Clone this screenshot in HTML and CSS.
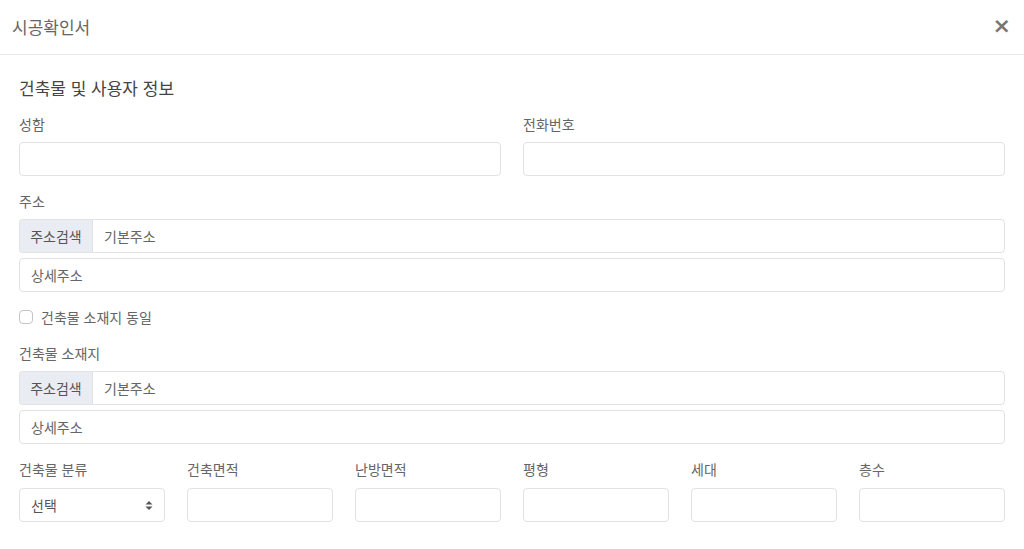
FILE: index.html
```html
<!DOCTYPE html>
<html lang="ko">
<head>
    <meta charset="UTF-8">
    <meta name="viewport" content="width=device-width, initial-scale=1.0">
    <title>시공확인서</title>
    <link rel="stylesheet" href="styles.css">
</head>
<body>
    <div class="modal">
        <div class="modal-header">
            <h1>시공확인서</h1>
            <span class="close">&times;</span>
        </div>

        <div class="modal-body">
            <h2>건축물 및 사용자 정보</h2>

            <div class="row two">
                <div class="form-group">
                    <label>성함</label>
                    <input type="text" class="form-control">
                </div>
                <div class="form-group">
                    <label>전화번호</label>
                    <input type="text" class="form-control">
                </div>
            </div>

            <div class="form-group">
                <label>주소</label>
                <div class="input-group">
                    <span class="addon">주소검색</span>
                    <input type="text" class="form-control" placeholder="기본주소">
                </div>
                <input type="text" class="form-control detail" placeholder="상세주소">
            </div>

            <div class="check">
                <span class="box"></span>
                <span>건축물 소재지 동일</span>
            </div>

            <div class="form-group">
                <label>건축물 소재지</label>
                <div class="input-group">
                    <span class="addon">주소검색</span>
                    <input type="text" class="form-control" placeholder="기본주소">
                </div>
                <input type="text" class="form-control detail" placeholder="상세주소">
            </div>

            <div class="row six">
                <div class="form-group">
                    <label>건축물 분류</label>
                    <div class="form-control select">
                        <span>선택</span>
                        <svg width="8" height="11" viewBox="0 0 8 11"><path d="M4 1L7.5 4.5H0.5Z M4 10L7.5 6.5H0.5Z" fill="#555"/></svg>
                    </div>
                </div>
                <div class="form-group">
                    <label>건축면적</label>
                    <input type="text" class="form-control">
                </div>
                <div class="form-group">
                    <label>난방면적</label>
                    <input type="text" class="form-control">
                </div>
                <div class="form-group">
                    <label>평형</label>
                    <input type="text" class="form-control">
                </div>
                <div class="form-group">
                    <label>세대</label>
                    <input type="text" class="form-control">
                </div>
                <div class="form-group">
                    <label>층수</label>
                    <input type="text" class="form-control">
                </div>
            </div>
        </div>
    </div>
</body>
</html>
```

FILE: styles.css
```css
body {
    font-family: "Noto Sans CJK KR", "Noto Sans", sans-serif;
    color: #555;
    background-color: #fff;
    margin: 0;
    padding: 0;
}
.modal-header {
    box-sizing: border-box;
    height: 55px;
    border-bottom: 1px solid #e6e6e6;
    display: flex;
    align-items: center;
    justify-content: space-between;
    padding: 0 13px 2px 12px;
}
.modal-header h1 {
    margin: 0;
    font-size: 17px;
    font-weight: 400;
    color: #666;
}
.close {
    font-family: "DejaVu Sans", sans-serif;
    font-size: 22px;
    font-weight: bold;
    color: #777;
    line-height: 1;
}
.modal-body {
    padding: 21px 19px 0 19px;
}
h2 {
    margin: 0 0 14px 0;
    font-size: 17px;
    font-weight: 400;
    line-height: 24px;
    color: #444;
}
.row {
    display: grid;
    column-gap: 22px;
}
.row.two {
    grid-template-columns: 1fr 1fr;
}
.row.six {
    grid-template-columns: repeat(6, 1fr);
}
.form-group {
    margin-bottom: 15px;
}
label {
    display: block;
    font-size: 14px;
    line-height: 20px;
    color: #666;
    margin-bottom: 8px;
}
.row.six label {
    margin-bottom: 9px;
}
.form-control {
    box-sizing: border-box;
    display: block;
    width: 100%;
    height: 34px;
    padding: 0 11px;
    border: 1px solid #e2e2e2;
    border-radius: 4px;
    font-family: inherit;
    font-size: 14px;
    color: #555;
    background: #fff;
    outline: none;
}
.form-control::placeholder {
    color: #666;
}
.input-group {
    display: flex;
    height: 34px;
}
.addon {
    box-sizing: border-box;
    flex: 0 0 73px;
    display: flex;
    align-items: center;
    justify-content: center;
    font-size: 14px;
    color: #555;
    background-color: #e9ecf3;
    border: 1px solid #e2e2e2;
    border-right: none;
    border-radius: 4px 0 0 4px;
}
.input-group .form-control {
    border-radius: 0 4px 4px 0;
}
.detail {
    margin-top: 5px;
}
.check {
    display: flex;
    align-items: center;
    gap: 8px;
    font-size: 14px;
    line-height: 20px;
    color: #666;
    margin: 0 0 16px 0;
}
.box {
    box-sizing: border-box;
    width: 14px;
    height: 14px;
    border: 1px solid #c4c4c4;
    border-radius: 4px;
}
.select {
    display: flex;
    align-items: center;
    justify-content: space-between;
}
```
